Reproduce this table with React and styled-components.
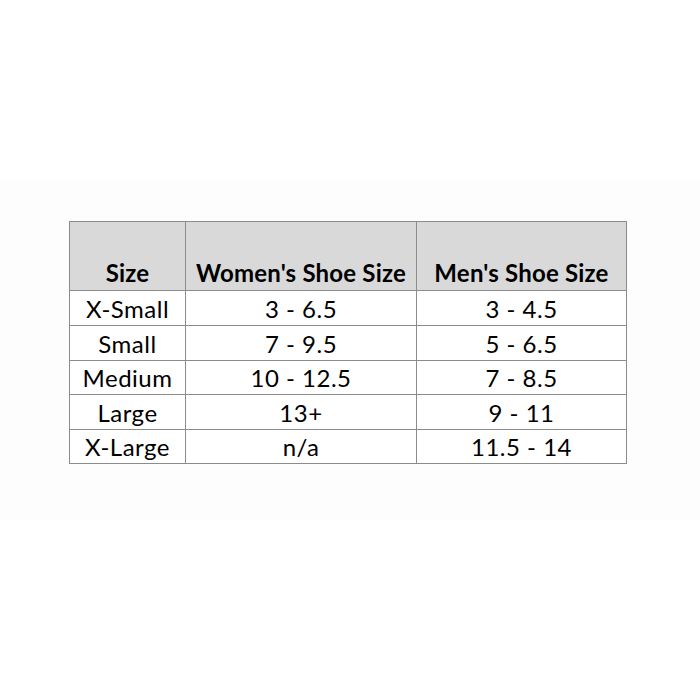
import React from "react";
import styled, { createGlobalStyle } from "styled-components";

const Global = createGlobalStyle`
  html, body { margin: 0; padding: 0; background: #ffffff; }
  body { font-family: Lato, "Open Sans", "Liberation Sans", sans-serif; }
`;

const Page = styled.div`
  width: 700px;
  height: 700px;
  box-sizing: border-box;
  padding-top: 179px;
  background: #ffffff;
`;

const Band = styled.div`
  height: 341px;
  box-sizing: border-box;
  padding: 42px 0 0 69px;
  background: #fdfdfd;
`;

const Table = styled.table`
  border-collapse: collapse;
  table-layout: fixed;
  width: 557px;
  color: #000000;
  font-size: 24px;
  background: #ffffff;
`;

const Row = styled.tr`
  height: ${(p) => p.$h}px;
`;

const HeadCell = styled.th`
  background: #d9d9d9;
  border: 1px solid #8c8c8c;
  font-weight: 700;
  vertical-align: bottom;
  text-align: center;
  padding: 0 0 3px 0;
  white-space: nowrap;
  letter-spacing: 0.2px;
`;

const Cell = styled.td`
  border: 1px solid #8c8c8c;
  text-align: center;
  vertical-align: middle;
  padding: 0;
  white-space: nowrap;
  letter-spacing: 0.5px;
`;

const rows = [
  ["X-Small", "3 - 6.5", "3 - 4.5", 35],
  ["Small", "7 - 9.5", "5 - 6.5", 35],
  ["Medium", "10 - 12.5", "7 - 8.5", 34],
  ["Large", "13+", "9 - 11", 35],
  ["X-Large", "n/a", "11.5 - 14", 34],
];

export default function App() {
  return (
    <Page>
      <Global />
      <Band>
        <Table>
          <colgroup>
            <col style={{ width: 116 }} />
            <col style={{ width: 231 }} />
            <col style={{ width: 210 }} />
          </colgroup>
          <thead>
            <Row $h={69}>
              <HeadCell>Size</HeadCell>
              <HeadCell>Women's Shoe Size</HeadCell>
              <HeadCell>Men's Shoe Size</HeadCell>
            </Row>
          </thead>
          <tbody>
            {rows.map(([a, b, c, h]) => (
              <Row key={a} $h={h}>
                <Cell>{a}</Cell>
                <Cell>{b}</Cell>
                <Cell>{c}</Cell>
              </Row>
            ))}
          </tbody>
        </Table>
      </Band>
    </Page>
  );
}
